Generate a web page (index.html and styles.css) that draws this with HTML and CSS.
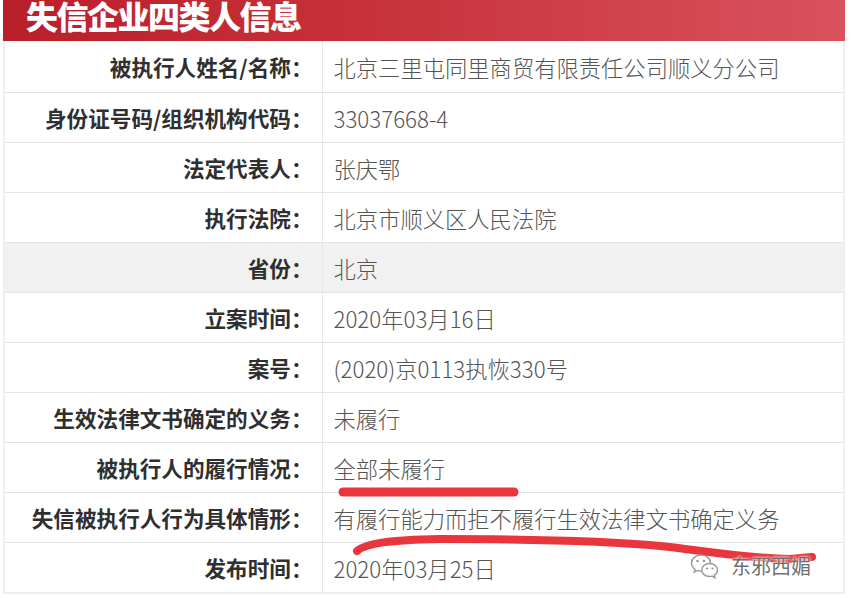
FILE: index.html
```html
<!DOCTYPE html>
<html lang="zh-CN">
<head>
    <meta charset="UTF-8">
    <meta name="viewport" content="width=device-width, initial-scale=1.0">
    <title>失信企业四类人信息</title>
    <link rel="stylesheet" href="styles.css">
</head>
<body>

<div class="page">
    <div class="panel">
        <div class="panel-title">
            <h1>失信企业四类人信息</h1>
        </div>
        <table class="info">
            <tr><th>被执行人姓名/名称：</th><td>北京三里屯同里商贸有限责任公司顺义分公司</td></tr>
            <tr><th>身份证号码/组织机构代码：</th><td>33037668-4</td></tr>
            <tr><th>法定代表人：</th><td>张庆鄂</td></tr>
            <tr><th>执行法院：</th><td>北京市顺义区人民法院</td></tr>
            <tr class="shade"><th>省份：</th><td>北京</td></tr>
            <tr><th>立案时间：</th><td>2020年03月16日</td></tr>
            <tr><th>案号：</th><td>(2020)京0113执恢330号</td></tr>
            <tr><th>生效法律文书确定的义务：</th><td>未履行</td></tr>
            <tr><th>被执行人的履行情况：</th><td>全部未履行</td></tr>
            <tr><th>失信被执行人行为具体情形：</th><td>有履行能力而拒不履行生效法律文书确定义务</td></tr>
            <tr><th>发布时间：</th><td>2020年03月25日</td></tr>
        </table>
    </div>

    <!-- hand-drawn marks on top of the screenshot -->
    <svg class="marks" width="866" height="598" viewBox="0 0 866 598">
        <path d="M343 492 L514 492" stroke="#e8363c" stroke-width="9" stroke-linecap="round" fill="none"/>
        <path d="M357 551 C366 543 390 540 440 539 C520 539 600 540 660 546 C700 550 740 558 790 559 L812 557"
              stroke="#e8363c" stroke-width="8" stroke-linecap="round" fill="none"/>
    </svg>

    <div class="watermark">
        <svg class="wechat" width="30" height="26" viewBox="0 0 30 26">
            <path d="M11 2 C5.5 2 1.5 5.6 1.5 10 C1.5 12.6 2.8 14.8 5 16.3 L4.2 19.2 L7.6 17.4 C8.7 17.8 9.8 18 11 18 C16.5 18 20.5 14.4 20.5 10 C20.5 5.6 16.5 2 11 2 Z"
                  fill="#fff" stroke="#9a9a9a" stroke-width="1.4"/>
            <path d="M19.5 10.5 C15.2 10.5 11.8 13.4 11.8 17 C11.8 20.6 15.2 23.5 19.5 23.5 C20.4 23.5 21.2 23.4 22 23.1 L25 24.7 L24.3 22.2 C26.3 21 27.5 19.1 27.5 17 C27.5 13.4 24 10.5 19.5 10.5 Z"
                  fill="#fff" stroke="#9a9a9a" stroke-width="1.4"/>
            <circle cx="7.5" cy="8" r="1.3" fill="#9a9a9a"/>
            <circle cx="14" cy="8" r="1.3" fill="#9a9a9a"/>
            <circle cx="17" cy="15.5" r="1.1" fill="#9a9a9a"/>
            <circle cx="22.5" cy="15.5" r="1.1" fill="#9a9a9a"/>
        </svg>
        <span>东邪西媚</span>
    </div>
</div>

</body>
</html>
```

FILE: styles.css
```css
body {
    margin: 0;
    padding: 0;
    background-color: #fff;
    font-family: "Noto Sans CJK SC", "Noto Sans", sans-serif;
}
.page {
    position: relative;
    width: 866px;
    height: 598px;
    overflow: hidden;
}
.panel {
    width: 842px;
    margin-left: 3px;
}
.panel-title {
    height: 41px;
    overflow: hidden;
    background: linear-gradient(to right, #b91f29, #c8323c 45%, #d9525e);
    padding-left: 23px;
}
.panel-title h1 {
    margin: -5px 0 0;
    font-size: 32px;
    line-height: 40px;
    font-weight: 900;
    letter-spacing: -1.5px;
    color: #fff;
}
.info {
    width: 100%;
    border-collapse: collapse;
    border: 2px solid #eeeeee;
    border-top: none;
}
.info tr:first-child th,
.info tr:first-child td {
    height: 51px;
}
.info th,
.info td {
    height: 49px;
    padding: 0;
    border-bottom: 1px solid #e4e4e4;
}
.info th {
    width: 318px;
    padding-right: 9px;
    box-sizing: border-box;
    text-align: right;
    font-size: 21.6px;
    font-weight: bold;
    color: #2f2f2f;
    border-right: 1px solid #e8e8e8;
    white-space: nowrap;
}
.info td {
    padding-left: 11px;
    text-align: left;
    font-size: 22.3px;
    font-weight: 300;
    color: #555;
    white-space: nowrap;
}
.info .shade th,
.info .shade td {
    background-color: #f1f1f1;
}
.marks {
    position: absolute;
    left: 0;
    top: 0;
}
.watermark {
    position: absolute;
    left: 690px;
    top: 551px;
    display: flex;
    align-items: center;
    gap: 11px;
}
.watermark span {
    font-size: 20px;
    color: #6f6f6f;
    text-shadow: 0 0 2px #fff, 0 0 3px #fff;
}
```
